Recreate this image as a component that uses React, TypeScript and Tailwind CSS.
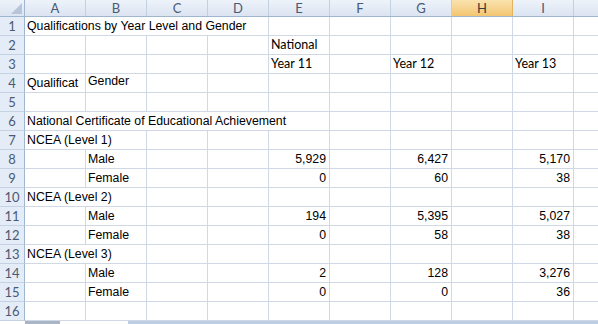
import React from "react";

type Cell = {
  span?: number;
  text?: string;
  align?: "left" | "right";
  top?: boolean;
  cal?: boolean;
};

const COLS = ["A", "B", "C", "D", "E", "F", "G", "H", "I", "J"];

const R = (t: string): Cell => ({ text: t, align: "right" });

const rows: Cell[][] = [
  [{ span: 4, text: "Qualifications by Year Level and Gender" }],
  [{}, {}, {}, {}, { text: "National", cal: true }],
  [{}, {}, {}, {}, { text: "Year 11", cal: true }, {}, { text: "Year 12", cal: true }, {}, { text: "Year 13", cal: true }],
  [{ text: "Qualificat" }, { text: "Gender", top: true }],
  [],
  [{ span: 5, text: "National Certificate of Educational Achievement" }],
  [{ span: 2, text: "NCEA (Level 1)" }],
  [{}, { text: "Male" }, {}, {}, R("5,929"), {}, R("6,427"), {}, R("5,170")],
  [{}, { text: "Female" }, {}, {}, R("0"), {}, R("60"), {}, R("38")],
  [{ span: 2, text: "NCEA (Level 2)" }],
  [{}, { text: "Male" }, {}, {}, R("194"), {}, R("5,395"), {}, R("5,027")],
  [{}, { text: "Female" }, {}, {}, R("0"), {}, R("58"), {}, R("38")],
  [{ span: 2, text: "NCEA (Level 3)" }],
  [{}, { text: "Male" }, {}, {}, R("2"), {}, R("128"), {}, R("3,276")],
  [{}, { text: "Female" }, {}, {}, R("0"), {}, R("0"), {}, R("36")],
  [],
];

function expand(cells: Cell[]): Cell[] {
  const out: Cell[] = [];
  let used = 0;
  for (const c of cells) {
    out.push(c);
    used += c.span ?? 1;
  }
  while (used < COLS.length) {
    out.push({});
    used += 1;
  }
  return out;
}

const arial = { fontFamily: '"Liberation Sans", Arial, sans-serif' };
const lato = { fontFamily: 'Lato, "Open Sans", sans-serif' };

function DataCell({ c }: { c: Cell }) {
  const span = c.span ?? 1;
  const width = span * 61;
  const alignCls = c.align === "right" ? "justify-end pr-[3px]" : "justify-start pl-[2px]";
  const vCls = c.top ? "items-start pt-0" : "items-end pb-[1px]";
  return (
    <div
      className={`relative flex h-full shrink-0 overflow-hidden border-r border-[#d0d7e5] ${alignCls} ${vCls}`}
      style={{ width }}
    >
      {c.text && (
        <span
          className={`whitespace-nowrap text-black ${c.cal ? "text-[12.5px] leading-[16px]" : "text-[12.3px] leading-[15px]"}`}
          style={c.cal ? lato : arial}
        >
          {c.text}
        </span>
      )}
    </div>
  );
}

export default function App() {
  return (
    <div className="relative h-[324px] w-[598px] overflow-hidden bg-white">
      {/* Column header row */}
      <div className="flex h-[17px] border-b border-[#9eb6ce]">
        <div className="relative h-full w-[25px] shrink-0 border-r border-[#9eb6ce] bg-gradient-to-b from-[#eef3fa] to-[#dbe4f1]">
          <svg className="absolute bottom-[2px] right-[2px]" width="11" height="11" viewBox="0 0 11 11">
            <polygon points="11,0 11,11 0,11" fill="#b6c5d9" />
          </svg>
        </div>
        {COLS.map((col, idx) => (
          <div
            key={col}
            className={`flex h-full w-[61px] shrink-0 items-center justify-center border-r ${
              col === "H"
                ? "border-[#e2b55c] bg-gradient-to-b from-[#fbe3ae] to-[#f2c570] text-[#3b3b3b]"
                : "border-[#c3d0e2] bg-gradient-to-b from-[#eef3fa] to-[#dbe4f1] text-[#4a5a72]"
            } text-[13px] leading-none`}
            style={lato}
          >
            {idx < COLS.length - 1 ? col : ""}
          </div>
        ))}
      </div>

      {/* Body rows */}
      {rows.map((cells, i) => (
        <div key={i} className="flex h-[19px] border-b border-[#d0d7e5]">
          <div
            className="-mb-px flex h-[19px] w-[25px] shrink-0 items-center justify-center border-r border-b border-r-[#9eb6ce] border-b-[#c5d2e3] bg-[#e4ecf7] text-[13px] leading-none text-[#4a5a72]"
            style={lato}
          >
            {i + 1}
          </div>
          {expand(cells).map((c, j) => (
            <DataCell key={j} c={c} />
          ))}
        </div>
      ))}

      {/* Bottom tab/scroll strip */}
      <div className="absolute bottom-0 left-0 flex h-[3px] w-full">
        <div className="h-full w-[25px] bg-white" />
        <div className="h-full w-[35px] bg-[#a9b4c4]" />
        <div className="h-full w-[68px] bg-white" />
        <div className="h-full flex-1 bg-[#bccde4]" />
      </div>
    </div>
  );
}
